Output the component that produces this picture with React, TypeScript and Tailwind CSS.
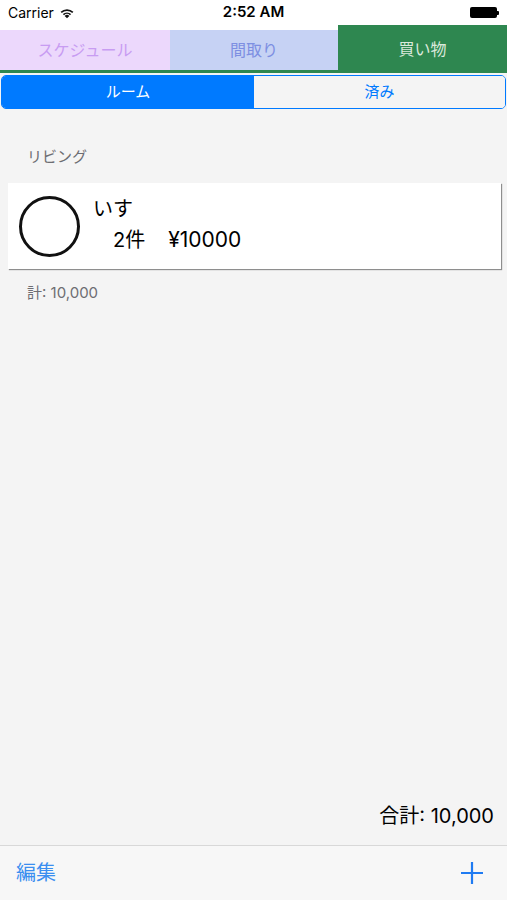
import React from "react";

const font = { fontFamily: '"Inter", "Noto Sans CJK JP", sans-serif' };

function Wifi() {
  return (
    <svg width="16" height="12" viewBox="0 0 15 11" className="ml-[5px]">
      <path d="M7.5 10.5 L5.3 8.2 A3.2 3.2 0 0 1 9.7 8.2 Z" fill="#111" />
      <path d="M3.6 6.5 A5.6 5.6 0 0 1 11.4 6.5 L10.3 7.6 A4.1 4.1 0 0 0 4.7 7.6 Z" fill="#111" />
      <path d="M1.5 4.4 A8.6 8.6 0 0 1 13.5 4.4 L12.4 5.5 A7.1 7.1 0 0 0 2.6 5.5 Z" fill="#111" />
    </svg>
  );
}

function Battery() {
  return (
    <div className="flex items-center">
      <div className="w-[27px] h-[11px] rounded-[2px] bg-black" />
      <div className="w-[2px] h-[4px] bg-black rounded-r-[1px]" />
    </div>
  );
}

export default function App() {
  return (
    <div className="w-[507px] h-[900px] flex flex-col bg-[#f4f4f4]" style={font}>
      <div className="bg-white">
        <div className="h-[25px] flex items-center justify-between px-[8px] relative">
          <div className="flex items-center text-[14px] text-black">
            <span>Carrier</span>
            <Wifi />
          </div>
          <div className="absolute left-0 right-0 text-center text-[15px] font-semibold text-black pointer-events-none">
            2:52 AM
          </div>
          <div>
            <Battery />
          </div>
        </div>
        <div className="h-[45px] flex items-end">
          <div className="w-[170px] h-[40px] bg-[#ecd8fc] flex items-center justify-center text-[16px] text-[#c89cf2]">
            スケジュール
          </div>
          <div className="w-[168px] h-[40px] bg-[#c6d2f4] flex items-center justify-center text-[16px] text-[#7d8fe2]">
            間取り
          </div>
          <div className="flex-1 h-full bg-[#2e8750] flex items-center justify-center text-[16px] text-[#dbe9dc] pt-[3px]">
            買い物
          </div>
        </div>
        <div className="h-[3px] bg-[#2e8750]" />
      </div>
      <div className="mt-[2px] mx-[1px] h-[34px] flex rounded-[5px] border border-[#007aff] overflow-hidden">
        <div className="w-[252px] bg-[#007aff] text-white flex items-center justify-center text-[15px]">
          ルーム
        </div>
        <div className="flex-1 bg-[#f4f4f4] text-[#007aff] flex items-center justify-center text-[15px]">
          済み
        </div>
      </div>
      <div className="mt-[38px] pl-[27px] text-[15px] leading-[20px] text-[#6d6d72]">
        リビング
      </div>
      <div className="mt-[16px] ml-[8px] mr-[6px] h-[86px] bg-white shadow-[1px_1px_1px_#8e8e8e] flex items-center pl-[11px]">
        <div className="w-[61px] h-[61px] rounded-full border-[3px] border-[#111]" />
        <div className="ml-[13px] flex flex-col text-[20px] text-black">
          <div className="leading-[26px] -mt-[3px]">いす</div>
          <div className="leading-[26px] mt-[5px] pl-[20px] flex items-baseline">
            <span>2件</span>
            <span className="ml-[23px] text-[21px]">¥10000</span>
          </div>
        </div>
      </div>
      <div className="mt-[14px] pl-[27px] text-[15px] leading-[20px] text-[#6d6d72]">
        計: 10,000
      </div>
      <div className="flex-1" />
      <div className="pr-[13px] text-right text-[20px] leading-[26px] text-black mb-[16px]">
        合計: 10,000
      </div>
      <div className="h-[1px] bg-[#d8d8d8]" />
      <div className="h-[54px] bg-[#f7f7f7] flex items-center justify-between pl-[16px] pr-[23px]">
        <span className="text-[20px] text-[#3a8ef0]">編集</span>
        <svg width="24" height="24" viewBox="0 0 24 24">
          <path d="M12 1 V23 M1 12 H23" stroke="#1f7bf2" strokeWidth="2.2" />
        </svg>
      </div>
    </div>
  );
}
